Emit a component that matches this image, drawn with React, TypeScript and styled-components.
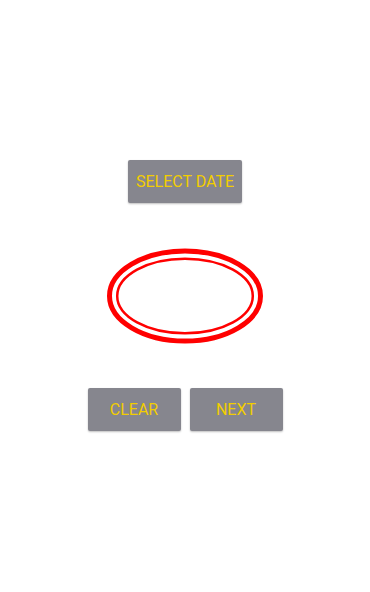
import React from 'react';
import styled, { createGlobalStyle } from 'styled-components';

const GlobalStyle = createGlobalStyle`
    html, body {
        margin: 0;
        padding: 0;
        background: #ffffff;
    }
    body {
        font-family: Roboto, "Noto Sans", sans-serif;
    }
`;

const Screen = styled.div`
    width: 370px;
    height: 592px;
    display: flex;
    flex-direction: column;
    align-items: center;
    padding-top: 160px;
    box-sizing: border-box;
`;

const Button = styled.button<{ $width: number }>`
    width: ${({ $width }) => $width}px;
    height: 43px;
    border: none;
    border-radius: 2px;
    background: #86868e;
    color: #f2cd00;
    font-family: Roboto, sans-serif;
    font-size: 16px;
    font-weight: 400;
    text-transform: uppercase;
    box-shadow: 0 1px 2px rgba(0, 0, 0, 0.25);
    padding: 0;
    cursor: pointer;
`;

const Stamp = styled.svg`
    margin-top: 45px;
    display: block;
`;

const ButtonRow = styled.div`
    display: flex;
    gap: 9px;
    margin-top: 44px;
`;

export default function App() {
    return (
        <>
            <GlobalStyle />
            <Screen>
                <Button $width={114}>Select Date</Button>
                <Stamp width="160" height="96" viewBox="0 0 160 96">
                    <ellipse cx="80" cy="48" rx="75.5" ry="45" fill="none" stroke="#ff0000" strokeWidth="5" />
                    <ellipse cx="80" cy="48" rx="67.8" ry="37.3" fill="none" stroke="#ff0000" strokeWidth="2.5" />
                </Stamp>
                <ButtonRow>
                    <Button $width={93}>Clear</Button>
                    <Button $width={93}>Next</Button>
                </ButtonRow>
            </Screen>
        </>
    );
}
